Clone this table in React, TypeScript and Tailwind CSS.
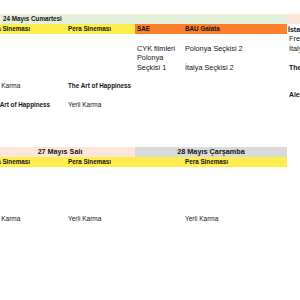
import React from "react";

type Cell = { t?: string; b?: boolean; cls?: string };

const widths = ["w-[81px]", "w-[69px]", "w-[48px]", "w-[104px]", "w-[60px]"];

const block1: Cell[][] = [
  [{}, {}, {}, {}, { t: "Freedom", cls: "text-[7.3px]" }],
  [{}, {}, { t: "CYK filmleri", cls: "text-[7.3px]" }, { t: "Polonya Seçkisi 2", cls: "text-[7.3px]" }, { t: "İtalya Seçkisi 1", cls: "text-[7.3px]" }],
  [{}, {}, { t: "Polonya", cls: "text-[7.3px]" }, {}, {}],
  [{}, {}, { t: "Seçkisi 1", cls: "text-[7.3px]" }, { t: "İtalya Seçkisi 2", cls: "text-[7.3px]" }, { t: "The Art of Happiness", b: true, cls: "text-[7px]" }],
  [{}, {}, {}, {}, {}],
  [{ t: "Yerli Karma", cls: "text-[6.5px]" }, { t: "The Art of Happiness", b: true, cls: "text-[6.3px]" }, {}, {}, {}],
  [{}, {}, {}, {}, { t: "Alesia", b: true, cls: "text-[6.8px]" }],
  [{ t: "The Art of Happiness", b: true, cls: "text-[6.3px]" }, { t: "Yerli Karma", cls: "text-[6.5px]" }, {}, {}, {}],
];

const block2: Cell[][] = [
  [{}, {}, {}, {}, {}],
  [{}, {}, {}, {}, {}],
  [{}, {}, {}, {}, {}],
  [{}, {}, {}, {}, {}],
  [{}, {}, {}, {}, {}],
  [{ t: "Yerli Karma", cls: "text-[6.5px]" }, { t: "Yerli Karma", cls: "text-[6.5px]" }, {}, { t: "Yerli Karma", cls: "text-[6.5px]" }, {}],
];

function Line({ cells }: { cells: Cell[] }) {
  return (
    <div className="flex h-[9.5px]">
      {cells.map((c, i) => (
        <div key={i} className={`${widths[i]} shrink-0 flex items-center pl-[2px] whitespace-nowrap leading-none text-[#141414]`}>
          {c.t ? <span className={`${c.cls ?? ""} ${c.b ? "font-bold" : ""}`}>{c.t}</span> : null}
        </div>
      ))}
    </div>
  );
}

export default function App() {
  return (
    <div
      className="w-[300px] h-[300px] overflow-hidden bg-white"
      style={{ fontFamily: '"Liberation Sans", Arial, sans-serif' }}
    >
      <div className="ml-[-15px] w-[362px]">
        <div className="h-[14px]" />
        {/* date row */}
        <div className="flex h-[10px]">
          <div className="w-[302px] shrink-0 bg-[#e2efda] flex items-center pl-[18px] leading-none">
            <span className="text-[6.3px] font-bold text-[#141414]">24 Mayıs Cumartesi</span>
          </div>
          <div className="w-[60px] shrink-0 bg-[#fde6d9]" />
        </div>
        {/* venue row */}
        <div className="flex h-[10px] leading-none text-[#141414]">
          <div className="w-[81px] shrink-0 bg-[#fdee4e] flex items-center pl-[2px] whitespace-nowrap">
            <span className="text-[6.3px] font-bold">Pera Sineması</span>
          </div>
          <div className="w-[69px] shrink-0 bg-[#fdee4e] flex items-center pl-[2px] whitespace-nowrap">
            <span className="text-[6.3px] font-bold">Pera Sineması</span>
          </div>
          <div className="w-[48px] shrink-0 bg-[#fc7f2c] flex items-center pl-[2px] whitespace-nowrap">
            <span className="text-[6.3px] font-bold">SAE</span>
          </div>
          <div className="w-[104px] shrink-0 bg-[#fc7f2c] flex items-center pl-[2px] whitespace-nowrap">
            <span className="text-[6.3px] font-bold">BAU Galata</span>
          </div>
          <div className="w-[60px] shrink-0 bg-white flex items-center pl-[1px] whitespace-nowrap">
            <span className="text-[7px] font-bold">İstanbul Modern</span>
          </div>
        </div>
        {block1.map((r, i) => (
          <Line key={i} cells={r} />
        ))}
        <div className="h-[37px]" />
        {/* block 2 date row */}
        <div className="flex h-[10px] leading-none text-[#141414]">
          <div className="w-[150px] shrink-0 bg-[#fde6d9] flex items-center justify-center whitespace-nowrap">
            <span className="text-[7.2px] font-bold">27 Mayıs Salı</span>
          </div>
          <div className="w-[152px] shrink-0 bg-[#dadada] flex items-center justify-center whitespace-nowrap">
            <span className="text-[7.3px] font-bold">28 Mayıs Çarşamba</span>
          </div>
          <div className="w-[60px] shrink-0" />
        </div>
        <div className="flex h-[10px] leading-none text-[#141414]">
          <div className="w-[81px] shrink-0 bg-[#fdee4e] flex items-center pl-[2px] whitespace-nowrap">
            <span className="text-[6.3px] font-bold">Pera Sineması</span>
          </div>
          <div className="w-[69px] shrink-0 bg-[#fdee4e] flex items-center pl-[2px] whitespace-nowrap">
            <span className="text-[6.3px] font-bold">Pera Sineması</span>
          </div>
          <div className="w-[48px] shrink-0 bg-[#fdee4e]" />
          <div className="w-[104px] shrink-0 bg-[#fdee4e] flex items-center pl-[2px] whitespace-nowrap">
            <span className="text-[6.3px] font-bold">Pera Sineması</span>
          </div>
          <div className="w-[60px] shrink-0" />
        </div>
        {block2.map((r, i) => (
          <Line key={i} cells={r} />
        ))}
      </div>
    </div>
  );
}
